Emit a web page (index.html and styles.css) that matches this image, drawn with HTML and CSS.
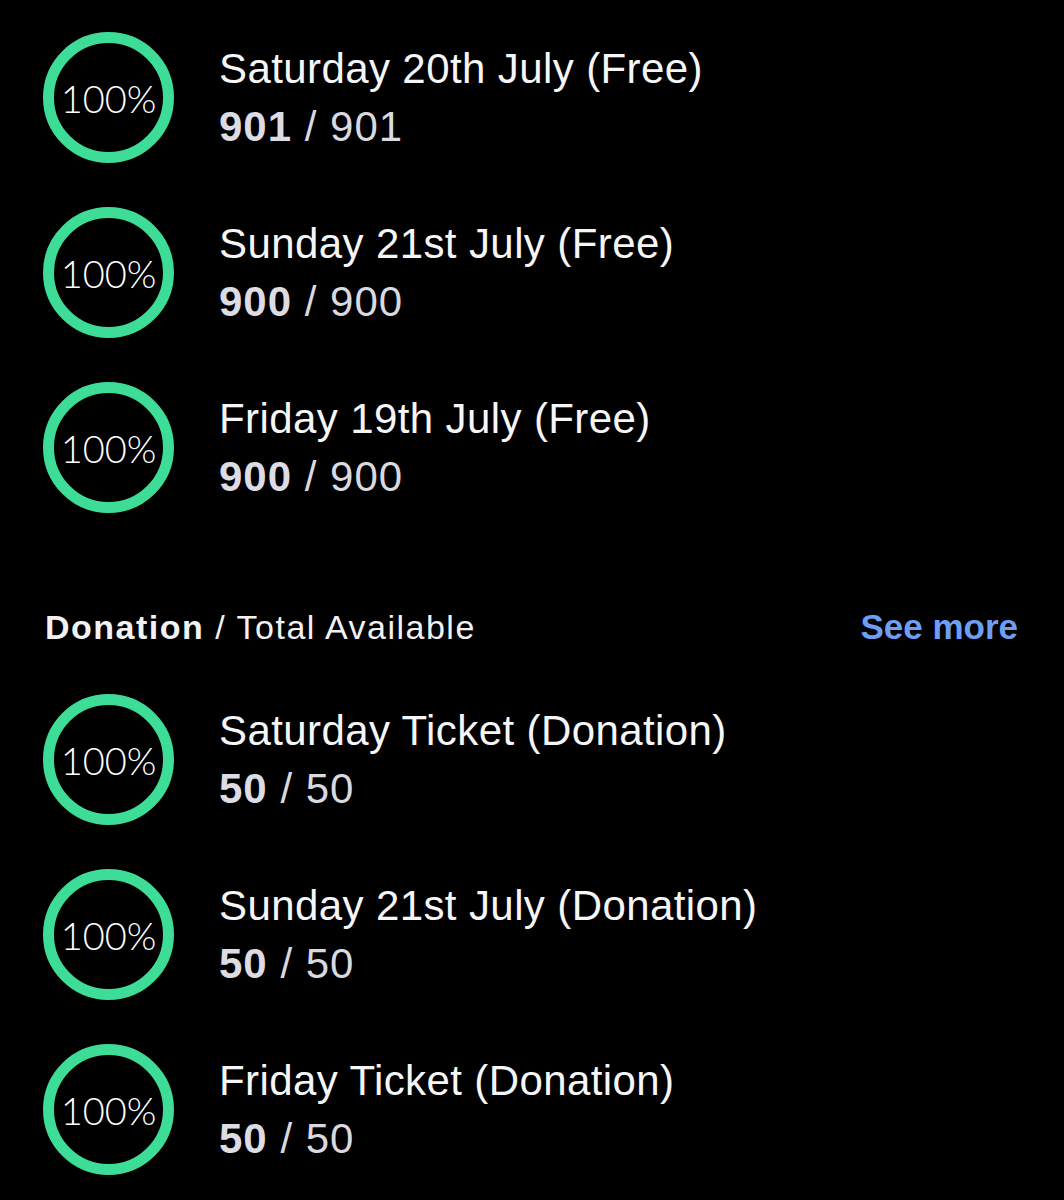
FILE: index.html
```html
<html>

<head>
  <link rel="stylesheet" href="styles.css">
</head>

<body>
  <div id="capacity">
    <div class="ticketList firstList">
      <div class="ticketRow">
        <div class="ring"><span class="ringLabel">100%</span></div>
        <div class="ticketInfo">
          <div class="ticketName">Saturday 20th July (Free)</div>
          <div class="ticketCount"><b>901</b> / 901</div>
        </div>
      </div>
      <div class="ticketRow">
        <div class="ring"><span class="ringLabel">100%</span></div>
        <div class="ticketInfo">
          <div class="ticketName">Sunday 21st July (Free)</div>
          <div class="ticketCount"><b>900</b> / 900</div>
        </div>
      </div>
      <div class="ticketRow">
        <div class="ring"><span class="ringLabel">100%</span></div>
        <div class="ticketInfo">
          <div class="ticketName">Friday 19th July (Free)</div>
          <div class="ticketCount"><b>900</b> / 900</div>
        </div>
      </div>
    </div>

    <div class="sectionHead">
      <span class="sectionTitle"><b>Donation</b> / Total Available</span>
      <a href="#" class="seeMore">See more</a>
    </div>

    <div class="ticketList">
      <div class="ticketRow">
        <div class="ring"><span class="ringLabel">100%</span></div>
        <div class="ticketInfo">
          <div class="ticketName">Saturday Ticket (Donation)</div>
          <div class="ticketCount"><b>50</b> / 50</div>
        </div>
      </div>
      <div class="ticketRow">
        <div class="ring"><span class="ringLabel">100%</span></div>
        <div class="ticketInfo">
          <div class="ticketName">Sunday 21st July (Donation)</div>
          <div class="ticketCount"><b>50</b> / 50</div>
        </div>
      </div>
      <div class="ticketRow">
        <div class="ring"><span class="ringLabel">100%</span></div>
        <div class="ticketInfo">
          <div class="ticketName">Friday Ticket (Donation)</div>
          <div class="ticketCount"><b>50</b> / 50</div>
        </div>
      </div>
    </div>
  </div>
</body>

</html>
```

FILE: styles.css
```css
body {
  margin: 0;
  background: #000000;
  color: #f4f4f6;
  font-family: "Liberation Sans", Arial, sans-serif;
}

#capacity {
  padding: 0 46px 0 43px;
}

.firstList {
  padding-top: 10px;
}

.ticketRow {
  display: flex;
  align-items: center;
  gap: 45px;
  height: 175px;
}

.ring {
  display: flex;
  align-items: center;
  justify-content: center;
  flex: none;
  width: 131px;
  height: 131px;
  box-sizing: border-box;
  border: 11px solid #3ddc97;
  border-radius: 50%;
}

.ringLabel {
  font-family: Lato, "Liberation Sans", sans-serif;
  font-weight: 300;
  font-size: 38px;
  color: #ffffff;
  white-space: nowrap;
}

.ticketName {
  font-size: 42px;
  line-height: 58px;
  letter-spacing: 0.4px;
  color: #f6f6f8;
}

.ticketCount {
  font-size: 42px;
  line-height: 58px;
  letter-spacing: 1px;
  color: #d9d9e0;
}

.ticketCount b {
  color: #dcdce2;
}

.sectionHead {
  display: flex;
  justify-content: space-between;
  align-items: center;
  height: 40px;
  margin: 72px 0 25px 2px;
}

.sectionTitle {
  font-size: 34px;
  letter-spacing: 1.5px;
  color: #f2f2f4;
}

.seeMore {
  font-size: 35px;
  font-weight: bold;
  color: #6d9ef3;
  text-decoration: none;
}
```
